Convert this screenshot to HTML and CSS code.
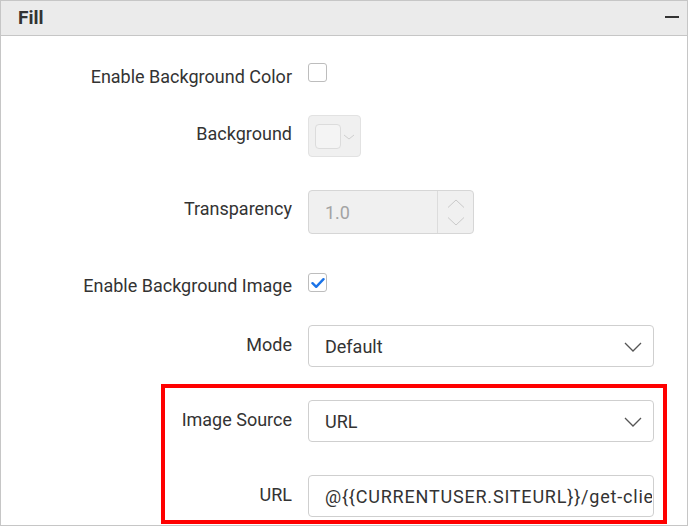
FILE: index.html
```html
<!DOCTYPE html>
<html>
<head>
<meta charset="utf-8">
<link rel="stylesheet" href="styles.css">
</head>
<body>
<div class="panel">
  <div class="panel-header">
    <span class="panel-title">Fill</span>
    <span class="collapse-icon"></span>
  </div>
  <div class="panel-body">
    <div class="row row-1">
      <div class="label label-check">Enable Background Color</div>
      <div class="checkbox"></div>
    </div>
    <div class="row row-2">
      <div class="label">Background</div>
      <div class="color-picker">
        <div class="swatch"></div>
        <svg class="mini-caret" width="12" height="8" viewBox="0 0 12 8"><path d="M1 2 L6 6 L11 2" fill="none" stroke="#cfcfcf" stroke-width="1"/></svg>
      </div>
    </div>
    <div class="row row-3">
      <div class="label">Transparency</div>
      <div class="numeric">
        <div class="numeric-value">1.0</div>
        <div class="spinner">
          <svg width="18" height="9" viewBox="0 0 18 9"><path d="M1 8.5 L9 1 L17 8.5" fill="none" stroke="#c9c9c9" stroke-width="1"/></svg>
          <svg width="18" height="9" viewBox="0 0 18 9"><path d="M1 0.5 L9 8 L17 0.5" fill="none" stroke="#c9c9c9" stroke-width="1"/></svg>
        </div>
      </div>
    </div>
    <div class="row row-4">
      <div class="label label-check">Enable Background Image</div>
      <div class="checkbox checked">
        <svg width="14" height="12" viewBox="0 0 14 12"><path d="M1.5 6.2 L5.2 9.8 L12.5 2.2" fill="none" stroke="#1a73e8" stroke-width="2.4" stroke-linecap="round" stroke-linejoin="round"/></svg>
      </div>
    </div>
    <div class="row row-5">
      <div class="label">Mode</div>
      <div class="dropdown">
        <span class="value">Default</span>
        <svg class="chevron" width="18" height="10" viewBox="0 0 18 10"><path d="M1 1 L9 9 L17 1" fill="none" stroke="#555" stroke-width="1.3"/></svg>
      </div>
    </div>
    <div class="row row-6">
      <div class="label">Image Source</div>
      <div class="dropdown">
        <span class="value">URL</span>
        <svg class="chevron" width="18" height="10" viewBox="0 0 18 10"><path d="M1 1 L9 9 L17 1" fill="none" stroke="#555" stroke-width="1.3"/></svg>
      </div>
    </div>
    <div class="row row-7">
      <div class="label">URL</div>
      <div class="textbox"><span class="value">@{{CURRENTUSER.SITEURL}}/get-client-image</span></div>
    </div>
  </div>
  <div class="highlight"></div>
</div>
</body>
</html>
```
FILE: styles.css
```css
* { box-sizing: border-box; }
html, body { margin: 0; padding: 0; background: #fff; }
body {
  font-family: Roboto, "Liberation Sans", Arial, sans-serif;
  color: #333;
  width: 688px;
  height: 526px;
  overflow: hidden;
}
.panel {
  position: relative;
  width: 688px;
  height: 526px;
  border: 1px solid #c6c6c6;
  background: #fff;
}
.panel-header {
  height: 35px;
  background: #ebebeb;
  border-bottom: 1px solid #c6c6c6;
  display: flex;
  align-items: center;
  justify-content: space-between;
  padding: 0 8px 0 17px;
}
.panel-title {
  font-size: 19px;
  font-weight: 700;
  color: #333;
  margin-top: -1px;
}
.collapse-icon {
  width: 14px;
  height: 2px;
  background: #333;
  margin-top: -2px;
}
.panel-body {
  display: flex;
  flex-direction: column;
  padding-top: 16px;
}
.row {
  display: flex;
  align-items: center;
  gap: 16px;
  height: 42px;
}
.row-2 { margin-top: 21px; }
.row-3 { margin-top: 33px; height: 44px; }
.row-4 { margin-top: 29px; }
.row-5 { margin-top: 20px; }
.row-6 { margin-top: 33px; }
.row-7 { margin-top: 33px; }
.label {
  width: 291px;
  text-align: right;
  font-size: 18px;
  line-height: 22px;
  color: #333;
  margin-top: -3px;
}
.row-1 .label { margin-top: 8px; }
.row-2 .label { margin-top: -5px; }
.row-3 .label { margin-top: -6px; }
.row-4 .label { margin-top: 4px; }
.checkbox {
  width: 19px;
  height: 19px;
  border: 1px solid #bdbdbd;
  border-radius: 3px;
  background: #fff;
  display: flex;
  align-items: center;
  justify-content: center;
  margin-top: -2px;
}
.row-4 .checkbox { margin-top: -3px; }
.color-picker {
  width: 53px;
  height: 42px;
  border: 1px solid #e2e2e2;
  border-radius: 4px;
  background: #f0f0f0;
  display: flex;
  align-items: center;
  padding-left: 6px;
  gap: 2px;
}
.swatch {
  width: 26px;
  height: 25px;
  border: 1px solid #dcdcdc;
  border-radius: 4px;
  background: #f4f4f4;
}
.mini-caret { margin-top: 2px; }
.numeric {
  width: 166px;
  height: 44px;
  border: 1px solid #d6d6d6;
  border-radius: 4px;
  background: #f0f0f0;
  display: flex;
}
.numeric-value {
  flex: 1;
  display: flex;
  align-items: center;
  padding-left: 16px;
  font-size: 18px;
  color: #a3a3a3;
  border-right: 1px solid #dcdcdc;
}
.spinner {
  width: 35px;
  display: flex;
  flex-direction: column;
  align-items: center;
  justify-content: center;
  gap: 9px;
}
.dropdown, .textbox {
  width: 346px;
  height: 42px;
  border: 1px solid #cfcfcf;
  border-radius: 4px;
  background: #fff;
  display: flex;
  align-items: center;
  padding: 0 11px 0 16px;
  font-size: 18px;
  color: #333;
}
.dropdown .value { flex: 1; }
.chevron { margin-top: 1px; }
.textbox {
  padding-right: 1px;
  overflow: hidden;
  white-space: nowrap;
  letter-spacing: 0.8px;
}
.textbox .value { overflow: hidden; }
.highlight {
  position: absolute;
  left: 160px;
  top: 383px;
  width: 506px;
  height: 140px;
  border: 4px solid #ff0000;
  pointer-events: none;
}
```
